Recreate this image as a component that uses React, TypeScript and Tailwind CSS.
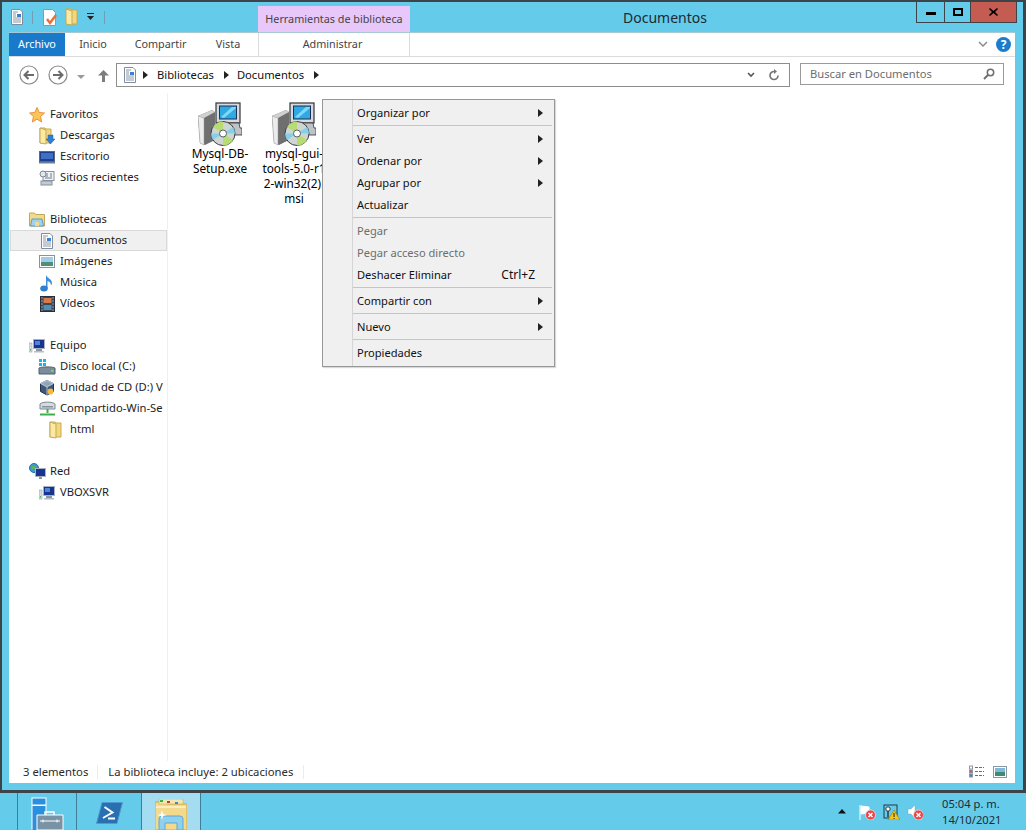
import type { ReactNode } from "react";

const DocIcon = ({ size = 16 }: { size?: number }) => (
  <svg width={size} height={size} viewBox="0 0 16 16" className="shrink-0">
    <path d="M2.500 .5h8.500l2.500 2.500v12.500h-11z" fill="#fdfdfd" stroke="#7f8d9c" />
    <path d="M4 3h5M4 5h3M4 7h3M4 9h8M4 11h8M4 13h8" stroke="#8b98a8" strokeWidth="1" />
    <rect x="8" y="5" width="4" height="3" fill="#3b7fd1" />
  </svg>
);

const FolderTall = ({ arrow = false }: { arrow?: boolean }) => (
  <svg width="16" height="18" viewBox="0 0 16 18" className="shrink-0">
    <path d="M1 1h5l1 1h5v14H1z" fill="#f3d77f" stroke="#c9a94f" />
    <path d="M1 1l6 2v14l-6-1z" fill="#fbe9a6" stroke="#c9a94f" />
    {arrow && <path d="M9 8h5v4h2l-4.500 5L7 12h2z" fill="#2f7fd8" stroke="#1f5fa8" strokeWidth=".5" />}
  </svg>
);

const Star = () => (
  <svg width="16" height="16" viewBox="0 0 16 16" className="shrink-0">
    <path d="M8 .5l2.200 5 5.300.5-4 3.500 1.200 5.500L8 12.200 3.300 15l1.200-5.500-4-3.500 5.300-.5z" fill="#fbc658" stroke="#ee8f3a" />
  </svg>
);

const Desktop = () => (
  <svg width="16" height="14" viewBox="0 0 16 14" className="shrink-0">
    <rect x=".5" y="1.500" width="15" height="10" fill="#1f3f8f" stroke="#5a6a80" />
    <rect x="2" y="3" width="12" height="6" fill="#3e6ec5" />
    <rect x="0" y="12" width="16" height="1.500" fill="#6a7f9c" />
  </svg>
);

const Recent = () => (
  <svg width="16" height="16" viewBox="0 0 16 16" className="shrink-0">
    <rect x="4" y="1.500" width="11" height="9" fill="#eef1f4" stroke="#87929e" />
    <path d="M6 4h3M6 6h3M11 4h2M11 6h2M6 8h7" stroke="#6f7c8a" />
    <circle cx="4" cy="4" r="3" fill="#dfe6ec" stroke="#7d8894" />
    <rect x="2" y="11" width="11" height="4" fill="#c2cad2" stroke="#87929e" />
  </svg>
);

const LibraryFolder = () => (
  <svg width="16" height="15" viewBox="0 0 16 15" className="shrink-0">
    <path d="M.5 2.500V1h5l1 1.500h9V14H.5z" fill="#f3d98a" stroke="#c4a658" />
    <path d="M3 7h10l1.500 7h-13z" fill="#9fd2ee" stroke="#5f9cc4" />
    <rect x="6" y="10" width="4" height="4" fill="#f3d98a" />
  </svg>
);

const Pictures = () => (
  <svg width="16" height="14" viewBox="0 0 16 14" className="shrink-0">
    <rect x=".5" y=".5" width="15" height="12" fill="#fff" stroke="#8793a0" />
    <rect x="2" y="2" width="12" height="5" fill="#9fcde8" />
    <rect x="2" y="7" width="12" height="4" fill="#4f8f7a" />
  </svg>
);

const Music = () => (
  <svg width="14" height="18" viewBox="0 0 14 18" className="shrink-0">
    <path d="M6 14V1c1 3 6 4 6 8 0 1-.5 2-1 2.500 0-3-2-4-3.500-4.500V14z" fill="#3f8fd8" />
    <ellipse cx="4" cy="14.500" rx="3.800" ry="3" fill="#2f7fd0" />
  </svg>
);

const Video = () => (
  <svg width="15" height="16" viewBox="0 0 15 16" className="shrink-0">
    <rect x=".5" y=".5" width="14" height="15" fill="#3c4650" stroke="#27303a" />
    <rect x="3.500" y="2" width="8" height="5" fill="#d67a4a" />
    <rect x="3.500" y="9" width="8" height="5" fill="#4a90b8" />
    <path d="M1.500 2h1M1.500 5h1M1.500 8h1M1.500 11h1M1.500 14h1M12.500 2h1M12.500 5h1M12.500 8h1M12.500 11h1M12.500 14h1" stroke="#e8edf2" />
  </svg>
);

const Computer = () => (
  <svg width="16" height="14" viewBox="0 0 16 14" className="shrink-0">
    <rect x="0" y="4" width="3" height="9" fill="#d8dde2" stroke="#8a949e" strokeWidth=".5" />
    <rect x="1" y="10" width="1" height="1.500" fill="#3fbf4f" />
    <rect x="4.500" y=".5" width="11" height="9" fill="#17358f" stroke="#a8b3bf" />
    <rect x="6" y="2" width="5" height="4" fill="#4f83dd" />
    <rect x="7" y="10" width="6" height="2" fill="#8b97a4" />
    <rect x="5" y="12" width="10" height="1.500" fill="#b5bec8" />
  </svg>
);

const Disk = () => (
  <svg width="18" height="17" viewBox="0 0 18 17" className="shrink-0">
    <path d="M1 1h3v3H1zM5 1h3v3H5zM1 5h3v3H1zM5 5h3v3H5z" fill="#12b5ec" />
    <path d="M1 10c2-1.500 14-1.500 16 0v6H1z" fill="#7c8c9a" stroke="#51606e" />
    <rect x="13" y="12" width="2.500" height="1.500" fill="#6fe06f" />
  </svg>
);

const VBox = () => (
  <svg width="16" height="16" viewBox="0 0 16 16" className="shrink-0">
    <path d="M8 .5l6.500 3v8L8 15l-6.500-3.500v-8z" fill="#3e5876" stroke="#1f3550" />
    <path d="M8 .5l6.500 3L8 7 1.500 3.500zM8 7v8" fill="#8fa5bc" stroke="#dfe7ef" strokeWidth=".7" />
    <circle cx="11.500" cy="11.500" r="3" fill="#f3b93a" />
  </svg>
);

const NetDrive = () => (
  <svg width="17" height="16" viewBox="0 0 17 16" className="shrink-0">
    <path d="M1 3c2-2.500 13-2.500 15 0v5H1z" fill="#d5dbe0" stroke="#7d8791" />
    <rect x="3" y="5" width="11" height="1.500" fill="#86929d" />
    <path d="M8.500 8v4M1 13.500h15" stroke="#3fae4f" strokeWidth="2" />
  </svg>
);

const Network = () => (
  <svg width="17" height="17" viewBox="0 0 17 17" className="shrink-0">
    <circle cx="5" cy="5" r="4.500" fill="#3d9ad8" stroke="#2c6ea0" />
    <path d="M2 3h4v3H3z" fill="#58b35a" />
    <rect x="6.500" y="5.500" width="10" height="8" fill="#17358f" stroke="#a8b3bf" />
    <rect x="10" y="14" width="3" height="2" fill="#8b97a4" />
  </svg>
);

const SetupIcon = () => (
  <svg width="44" height="44" viewBox="0 0 44 44" className="shrink-0">
    {/* tower */}
    <path d="M0 14l14-6 3 2v28l-10 5-5-2z" fill="#6f6f6f" />
    <path d="M0 14l6 2v27l-4-2z" fill="#ececec" stroke="#9a9a9a" strokeWidth=".5" />
    <path d="M0 14l14-6 3 2-11 6z" fill="#d0d0d0" />
    {/* monitor */}
    <rect x="18" y="1" width="24" height="20" fill="#d8dadd" stroke="#2f3338" strokeWidth="1.200" />
    <rect x="21.500" y="4" width="17" height="13" fill="#2fa9e4" stroke="#1b2f57" />
    <path d="M23 15l11-10h4v1L26 16z" fill="#7fd8f5" />
    <path d="M20 21h21l1 5h2v7H30z" fill="#bfc2c6" stroke="#2f3338" strokeWidth=".8" />
    {/* disc */}
    <circle cx="25" cy="31.500" r="12" fill="#cfd6d2" stroke="#3a3f45" />
    <path d="M25 31.500L15 25a12 12 0 0 1 10-5.500zM25 31.500l10 6.500a12 12 0 0 1-10 5.500z" fill="#b6dc72" />
    <path d="M25 31.500l10-6.500a12 12 0 0 1 2 6.500zM25 31.500l-10 6.500a12 12 0 0 1-2-6.500z" fill="#86cfe8" />
    <circle cx="25" cy="31.500" r="3.500" fill="#fff" stroke="#5a5f66" />
  </svg>
);

const FileItem = ({ lines }: { lines: string[] }) => (
  <div className="flex w-[74px] shrink-0 flex-col items-center overflow-hidden">
    <SetupIcon />
    <div className="whitespace-nowrap text-center text-[11.8px] leading-[15px] text-black">
      {lines.map((l) => (
        <div key={l}>{l}</div>
      ))}
    </div>
  </div>
);

const NavRow = ({
  icon,
  label,
  level = 1,
  selected = false,
}: {
  icon: ReactNode;
  label: string;
  level?: number;
  selected?: boolean;
}) => (
  <div
    className={`flex h-[21px] items-center overflow-hidden whitespace-nowrap text-[11.2px] text-[#1c1c1c] ${
      selected ? "ml-[1px] bg-[#f0f0f0] shadow-[inset_0_0_0_1px_#d9d9d9]" : ""
    }`}
  >
    <div
      className={`flex w-[18px] shrink-0 items-center justify-center ${
        selected ? "ml-[28px]" : level === 0 ? "ml-[19px]" : level === 1 ? "ml-[29px]" : "ml-[39px]"
      }`}
    >
      {icon}
    </div>
    <span className="ml-[4px]">{label}</span>
  </div>
);

const Caret = ({ disabled = false }: { disabled?: boolean }) => (
  <svg width="5" height="8" viewBox="0 0 5 8" className="shrink-0">
    <path d="M0 0l5 4-5 4z" fill={disabled ? "#8a8a8a" : "#222"} />
  </svg>
);

const MenuItem = ({
  label,
  sub = false,
  hint,
  disabled = false,
}: {
  label: string;
  sub?: boolean;
  hint?: string;
  disabled?: boolean;
}) => (
  <div
    className={`flex h-[22px] items-center pl-[34px] pr-[11px] text-[11.1px] ${
      disabled ? "text-[#6d6d6d]" : "text-[#111]"
    }`}
  >
    <span className="flex-1">{label}</span>
    {hint && <span className="mr-[8px] text-[12px]">{hint}</span>}
    {sub && <Caret />}
  </div>
);

const MenuSep = () => (
  <div className="h-[4px] pl-[29px] pr-[2px] pt-px">
    <div className="h-px w-full bg-[#c5c5c5]" />
  </div>
);

const QatSep = () => <div className="h-[13px] w-px bg-[#6f9fb4]" />;

const BackForward = ({ d }: { d: string }) => (
  <svg width="20" height="20" viewBox="0 0 20 20">
    <circle cx="10" cy="10" r="9" fill="#fff" stroke="#8a8a8a" strokeWidth="1.200" />
    <path d={d} fill="none" stroke="#6b6b6b" strokeWidth="2" />
  </svg>
);

const RedBadge = () => (
  <g>
    <circle cx="11.500" cy="11" r="5" fill="#e8474a" stroke="#f6d9d9" strokeWidth=".8" />
    <path d="M9.500 9l4 4M13.500 9l-4 4" stroke="#fff" strokeWidth="1.500" />
  </g>
);

export default function App() {
  return (
    <div className="flex h-[830px] w-[1026px] flex-col overflow-hidden bg-[#65cbeb] font-['Noto_Sans','Open_Sans',sans-serif]">
      <div className="relative flex h-[793px] shrink-0 flex-col border-t-2 border-r-[3px] border-b-[3px] border-l-2 border-[#3c4449] pl-[7px] pr-[6px]">
        {/* title bar */}
        <div className="flex h-[31px] shrink-0 items-start">
          <div className="mt-[6px] flex h-[18px] w-[249px] items-center">
            <DocIcon />
            <div className="ml-[7px]">
              <QatSep />
            </div>
            <div className="ml-[9px]">
              <svg width="16" height="17" viewBox="0 0 16 17">
                <path d="M1.500 .5h9l3 3v13h-12z" fill="#fff" stroke="#8d98a3" />
                <path d="M5 10l3 4 6-8" fill="none" stroke="#e8703a" strokeWidth="2.500" />
              </svg>
            </div>
            <div className="ml-[7px]">
              <FolderTall />
            </div>
            <svg width="8" height="8" viewBox="0 0 8 8" className="ml-[6px]">
              <path d="M0 0h7v1H0zM0 3h7L3.500 7z" fill="#222" />
            </svg>
            <div className="ml-[9px]">
              <QatSep />
            </div>
          </div>
          <div className="mt-[4px] flex h-[27px] w-[152px] items-center justify-center whitespace-nowrap bg-[#e8c8fa] text-[10.8px] text-[#444]">
            Herramientas de biblioteca
          </div>
          <div className="flex-1 pt-[6px] pl-[213px] text-[14px] leading-[19px] text-[#1c2a33]">Documentos</div>
          <div className="flex h-[21px] border-x border-b border-[#3c4449]">
            <div className="flex w-[28px] items-center justify-center border-r border-[#3c4449]">
              <div className="mt-[3px] h-[3px] w-[10px] bg-black" />
            </div>
            <div className="flex w-[26px] items-center justify-center border-r border-[#3c4449]">
              <div className="h-[8px] w-[10px] border-2 border-black" />
            </div>
            <div className="flex w-[45px] items-center justify-center bg-[#c45c52]">
              <svg width="9" height="8" viewBox="0 0 9 8">
                <path d="M1 0l3.500 3L8 0l1 1-3 3 3 3-1 1-3.500-3L1 8 0 7l3-3-3-3z" fill="#000" />
              </svg>
            </div>
          </div>
        </div>

        {/* ribbon + body */}
        <div className="mr-[2px] flex min-h-0 flex-1 flex-col bg-white shadow-[0_-1px_0_#a7c9d6]">
          <div className="flex h-[24px] shrink-0 items-center border-b border-[#dadbdc] text-[10.8px] text-[#444]">
            <div className="flex h-full w-[56px] items-center justify-center bg-[#1979ca] text-white">Archivo</div>
            <div className="w-[56px] text-center">Inicio</div>
            <div className="w-[79px] text-center">Compartir</div>
            <div className="w-[56px] text-center">Vista</div>
            <div className="ml-[2px] flex h-full w-[152px] items-center justify-center border-x border-[#dadbdc] pr-[3px]">
              Administrar
            </div>
            <div className="flex-1" />
            <svg width="10" height="7" viewBox="0 0 10 7" className="mr-[8px]">
              <path d="M1 1l4 4 4-4" fill="none" stroke="#8a8a8a" strokeWidth="1.500" />
            </svg>
            <div className="mr-[4px] flex h-[15px] w-[15px] items-center justify-center rounded-full bg-[#1b7ccb] text-[12px] font-bold text-white">
              ?
            </div>
          </div>

          {/* address row */}
          <div className="flex h-[36px] shrink-0 items-start pt-[6px] text-[11.2px]">
            <div className="ml-[10px] flex h-[20px] items-center gap-[9px] pt-[3px]">
              <BackForward d="M15 10H6M9.500 6L5.500 10l4 4" />
              <BackForward d="M5 10h9M10.500 6l4 4-4 4" />
            </div>
            <svg width="8" height="5" viewBox="0 0 8 5" className="mt-[12px] ml-[9px]">
              <path d="M0 0h8L4 4z" fill="#9a9a9a" />
            </svg>
            <svg width="11" height="12" viewBox="0 0 11 12" className="mt-[7px] ml-[13px]">
              <path d="M5.500 0L11 5.500H7V12H4V5.500H0z" fill="#7d7d7d" />
            </svg>
            <div className="ml-[7px] flex h-[24px] w-[674px] items-center border border-[#8d8d8d] pl-[5px] pr-[9px] text-[#111]">
              <DocIcon />
              <div className="ml-[5px]">
                <Caret />
              </div>
              <span className="ml-[9px]">Bibliotecas</span>
              <div className="ml-[10px]">
                <Caret />
              </div>
              <span className="ml-[8px]">Documentos</span>
              <div className="ml-[10px]">
                <Caret />
              </div>
              <div className="flex-1" />
              <svg width="8" height="6" viewBox="0 0 8 6" className="mr-[13px]">
                <path d="M1 1l3 3 3-3" fill="none" stroke="#555" strokeWidth="1.600" />
              </svg>
              <svg width="12" height="12" viewBox="0 0 12 12">
                <path d="M10 6.500A4 4 0 1 1 6 2.500" fill="none" stroke="#777" strokeWidth="1.700" />
                <path d="M6 0v5l3-2.500z" fill="#777" />
              </svg>
            </div>
            <div className="ml-[10px] flex h-[22px] w-[204px] items-center justify-between border border-[#9a9a9a] pl-[9px] pr-[8px] text-[#6d6d6d]">
              <span>Buscar en Documentos</span>
              <svg width="12" height="12" viewBox="0 0 12 12">
                <circle cx="7.500" cy="4.500" r="3.200" fill="none" stroke="#6f6f6f" strokeWidth="1.500" />
                <path d="M5 7l-4 4" stroke="#6f6f6f" strokeWidth="2" />
              </svg>
            </div>
          </div>

          {/* nav + files */}
          <div className="flex min-h-0 flex-1">
            <div className="flex w-[159px] shrink-0 flex-col gap-[21px] border-r border-[#f0f0f0] pt-[11px]">
              <div>
                <NavRow level={0} icon={<Star />} label="Favoritos" />
                <NavRow icon={<FolderTall arrow />} label="Descargas" />
                <NavRow icon={<Desktop />} label="Escritorio" />
                <NavRow icon={<Recent />} label="Sitios recientes" />
              </div>
              <div>
                <NavRow level={0} icon={<LibraryFolder />} label="Bibliotecas" />
                <NavRow icon={<DocIcon />} label="Documentos" selected />
                <NavRow icon={<Pictures />} label="Imágenes" />
                <NavRow icon={<Music />} label="Música" />
                <NavRow icon={<Video />} label="Vídeos" />
              </div>
              <div>
                <NavRow level={0} icon={<Computer />} label="Equipo" />
                <NavRow icon={<Disk />} label="Disco local (C:)" />
                <NavRow icon={<VBox />} label="Unidad de CD (D:) V" />
                <NavRow icon={<NetDrive />} label="Compartido-Win-Se" />
                <NavRow level={2} icon={<FolderTall />} label="html" />
              </div>
              <div>
                <NavRow level={0} icon={<Network />} label="Red" />
                <NavRow icon={<Computer />} label="VBOXSVR" />
              </div>
            </div>
            <div className="flex flex-1 items-start pt-[9px] pl-[15px]">
              <FileItem lines={["Mysql-DB-", "Setup.exe"]} />
              <FileItem lines={["mysql-gui-", "tools-5.0-r1", "2-win32(2).", "msi"]} />
            </div>
          </div>

          {/* status bar */}
          <div className="flex h-[22px] shrink-0 items-center pl-[14px] pr-[8px] text-[11.3px] text-[#2b2b2b]">
            <span>3 elementos</span>
            <div className="ml-[9px] h-[14px] w-px bg-[#ececec]" />
            <span className="ml-[10px]">La biblioteca incluye: 2 ubicaciones</span>
            <div className="ml-[10px] h-[14px] w-px bg-[#ececec]" />
            <div className="flex-1" />
            <svg width="16" height="14" viewBox="0 0 16 14">
              <path d="M6 2.500h9M6 6.500h9M6 10.500h9" stroke="#5f6f82" strokeDasharray="3 1" />
              <rect x=".5" y="1" width="3" height="3" fill="#fff" stroke="#8b98a8" />
              <rect x=".5" y="5" width="3" height="3" fill="#e2524a" stroke="#8b98a8" />
              <rect x=".5" y="9" width="3" height="3" fill="#3b7fd1" stroke="#8b98a8" />
            </svg>
            <div className="ml-[8px]">
              <svg width="14" height="12" viewBox="0 0 14 12">
                <rect x=".5" y=".5" width="13" height="11" fill="#fff" stroke="#8b98a8" />
                <rect x="2" y="2" width="10" height="4" fill="#7fb8d8" />
                <rect x="2" y="6" width="10" height="4" fill="#3f8a72" />
              </svg>
            </div>
          </div>
        </div>
        <div className="h-[7px] shrink-0" />

        {/* context menu */}
        <div className="absolute top-[97px] left-[320px] w-[233px] border border-[#979797] bg-[#f0f0f0] py-[2px] shadow-[1px_1px_1px_rgba(0,0,0,0.15)]">
          <div className="absolute top-0 bottom-0 left-[29px] w-px bg-[#d5d5d5]" />
          <MenuItem label="Organizar por" sub />
          <MenuSep />
          <MenuItem label="Ver" sub />
          <MenuItem label="Ordenar por" sub />
          <MenuItem label="Agrupar por" sub />
          <MenuItem label="Actualizar" />
          <MenuSep />
          <MenuItem label="Pegar" disabled />
          <MenuItem label="Pegar acceso directo" disabled />
          <MenuItem label="Deshacer Eliminar" hint="Ctrl+Z" />
          <MenuSep />
          <MenuItem label="Compartir con" sub />
          <MenuSep />
          <MenuItem label="Nuevo" sub />
          <MenuSep />
          <MenuItem label="Propiedades" />
        </div>
      </div>

      {/* taskbar */}
      <div className="flex h-[37px] flex-1 items-stretch overflow-hidden pl-[17px]">
        <div className="flex w-[60px] justify-center border-x border-[#3f7f96] pt-[4px]">
          <svg width="33" height="33" viewBox="0 0 33 33">
            <rect x=".5" y=".5" width="15" height="32" fill="#fff" />
            <rect x="1.500" y="1.500" width="13" height="6" fill="#2a8fdc" />
            <rect x="1.500" y="9" width="13" height="24" fill="#2a8fdc" />
            <path d="M6 18h26v15H6z" fill="#7892a6" stroke="#fff" />
            <path d="M14 18v-3h9v3" fill="none" stroke="#fff" strokeWidth="1.500" />
            <path d="M9 24h20" stroke="#fff" />
            <path d="M12 22.500v3M26 22.500v3" stroke="#fff" />
          </svg>
        </div>
        <div className="flex w-[65px] justify-center border-r border-[#3f7f96] pt-[9px]">
          <svg width="27" height="22" viewBox="0 0 27 22">
            <path d="M6 .5h20.500L21 21.500H.5z" fill="#2a6fb0" stroke="#4f9ad0" />
            <path d="M8.500 5l8 5.500-9.500 5.500M12 16.500h7" fill="none" stroke="#fff" strokeWidth="2" />
          </svg>
        </div>
        <div className="flex w-[59px] justify-center border-r border-[#3f7f96] bg-[#a4ddf2] pt-[6px]">
          <svg width="32" height="31" viewBox="0 0 32 31">
            <path d="M0 3h10l2 2h20v26H0z" fill="#f3d98c" stroke="#c9a94f" />
            <path d="M1 8h30" stroke="#fbedc0" strokeWidth="2" />
            <rect x="4" y="0" width="24" height="5" fill="#f5e5b0" stroke="#c9a94f" strokeWidth=".5" />
            <rect x="5" y="1" width="3" height="2" fill="#35b44a" />
            <rect x="12" y="2" width="3" height="2" fill="#c43a3a" />
            <rect x="20" y="3" width="3" height="2" fill="#2a8fdc" />
            <path d="M4 31V20q0-3 3-3h18q3 0 3 3v11h-6v-7H10v7z" fill="#8fd0ef" stroke="#5aa9d6" />
            <path d="M7 11l1 4 4 1-4 1-1 4-1-4-4-1 4-1z" fill="#fff" />
          </svg>
        </div>
        <div className="flex-1" />
        <div className="flex items-center pr-[27px]">
          <svg width="8" height="5" viewBox="0 0 8 5">
            <path d="M4 0l4 4.500H0z" fill="#111" />
          </svg>
          <svg width="17" height="16" viewBox="0 0 17 16" className="ml-[13px]">
            <path d="M1 1v15M2 2l8 1v6l-8 1z" fill="#fff" stroke="#fff" />
            <RedBadge />
          </svg>
          <svg width="17" height="16" viewBox="0 0 17 16" className="ml-[7px]">
            <rect x="1" y="1" width="13" height="13" fill="none" stroke="#263b47" />
            <circle cx="5" cy="5" r="2.200" fill="#fff" stroke="#263b47" />
            <path d="M5 7v6" stroke="#263b47" strokeWidth="1.500" />
            <path d="M11 6l6 10H5z" fill="#f5c518" stroke="#8a6d00" strokeWidth=".5" />
            <path d="M11 9v4M11 14v1" stroke="#222" />
          </svg>
          <svg width="16" height="16" viewBox="0 0 16 16" className="ml-[7px]">
            <path d="M1 5h3l4-4v13l-4-4H1z" fill="#fff" stroke="#8aa5b3" strokeWidth=".5" />
            <RedBadge />
          </svg>
          <div className="ml-[19px] w-[57px] whitespace-nowrap text-center text-[11.2px] leading-[16px] text-[#1c2a33]">
            <div>05:04 p. m.</div>
            <div>14/10/2021</div>
          </div>
        </div>
      </div>
    </div>
  );
}
